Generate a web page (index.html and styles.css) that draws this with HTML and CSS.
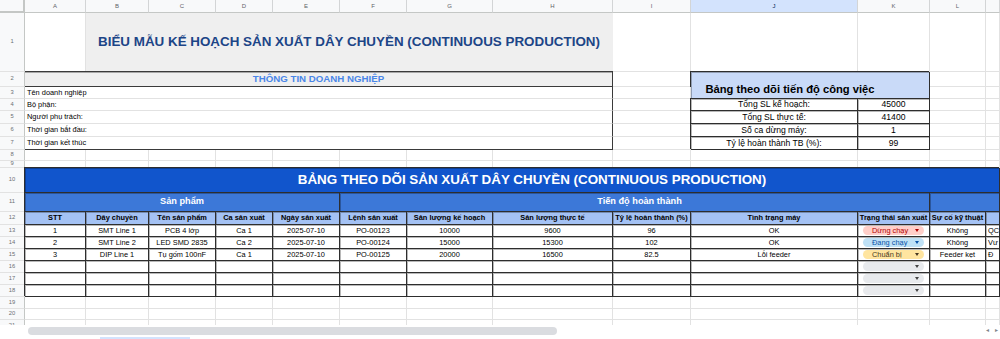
FILE: index.html
```html
<!DOCTYPE html>
<html lang="vi">
<head>
<meta charset="utf-8">
<title>Biểu mẫu kế hoạch sản xuất dây chuyền</title>
<link rel="stylesheet" href="styles.css">
</head>
<body>
<div class="sheet">
  <!-- column headers -->
  <div class="c corner"></div>
  <div class="c hd">A</div><div class="c hd">B</div><div class="c hd">C</div><div class="c hd">D</div><div class="c hd">E</div><div class="c hd">F</div><div class="c hd">G</div><div class="c hd">H</div><div class="c hd">I</div><div class="c hd sel">J</div><div class="c hd">K</div><div class="c hd">L</div><div class="c hd"></div>

  <!-- row 1 -->
  <div class="c rh">1</div>
  <div class="c"></div>
  <div class="c s7 title">BIỂU MẪU KẾ HOẠCH SẢN XUẤT DÂY CHUYỀN (CONTINUOUS PRODUCTION)</div>
  <div class="c"></div><div class="c"></div><div class="c"></div><div class="c"></div><div class="c"></div>

  <!-- row 2 -->
  <div class="c rh">2</div>
  <div class="c s8 info-head">THÔNG TIN DOANH NGHIỆP</div>
  <div class="c"></div>
  <div class="c s2 r2 dk prog-head">Bảng theo dõi tiến độ công việc</div>
  <div class="c"></div><div class="c"></div>

  <!-- row 3 -->
  <div class="c rh">3</div>
  <div class="c s8 lbl box">Tên doanh nghiệp</div>
  <div class="c"></div>
  <div class="c"></div><div class="c"></div>

  <!-- row 4 -->
  <div class="c rh">4</div>
  <div class="c s8 lbl box">Bộ phận:</div>
  <div class="c"></div>
  <div class="c dk kv">Tổng SL kế hoạch:</div><div class="c dk kv">45000</div>
  <div class="c"></div><div class="c"></div>

  <!-- row 5 -->
  <div class="c rh">5</div>
  <div class="c s8 lbl box">Người phụ trách:</div>
  <div class="c"></div>
  <div class="c dk kv">Tổng SL thực tế:</div><div class="c dk kv">41400</div>
  <div class="c"></div><div class="c"></div>

  <!-- row 6 -->
  <div class="c rh">6</div>
  <div class="c s8 lbl box">Thời gian bắt đầu:</div>
  <div class="c"></div>
  <div class="c dk kv">Số ca dừng máy:</div><div class="c dk kv">1</div>
  <div class="c"></div><div class="c"></div>

  <!-- row 7 -->
  <div class="c rh">7</div>
  <div class="c s8 lbl box box-end">Thời gian kết thúc</div>
  <div class="c"></div>
  <div class="c dk kv">Tỷ lệ hoàn thành TB (%):</div><div class="c dk kv">99</div>
  <div class="c"></div><div class="c"></div>

  <!-- row 8 -->
  <div class="c rh">8</div>
  <div class="c"></div><div class="c"></div><div class="c"></div><div class="c"></div><div class="c"></div><div class="c"></div><div class="c"></div><div class="c"></div><div class="c"></div><div class="c"></div><div class="c"></div><div class="c"></div><div class="c"></div>

  <!-- row 9 -->
  <div class="c rh">9</div>
  <div class="c"></div><div class="c"></div><div class="c"></div><div class="c"></div><div class="c"></div><div class="c"></div><div class="c"></div><div class="c"></div><div class="c"></div><div class="c"></div><div class="c"></div><div class="c"></div><div class="c"></div>

  <!-- row 10 -->
  <div class="c rh">10</div>
  <div class="c s13 dk banner">BẢNG THEO DÕI SẢN XUẤT DÂY CHUYỀN (CONTINUOUS PRODUCTION)</div>

  <!-- row 11 -->
  <div class="c rh">11</div>
  <div class="c s5 dk group">Sản phẩm</div>
  <div class="c s6 dk group group-wide">Tiến độ hoàn thành</div>
  <div class="c s2 dk group"></div>

  <!-- row 12 -->
  <div class="c rh">12</div>
  <div class="c dk th">STT</div>
  <div class="c dk th">Dây chuyền</div>
  <div class="c dk th">Tên sản phẩm</div>
  <div class="c dk th">Ca sản xuất</div>
  <div class="c dk th">Ngày sản xuất</div>
  <div class="c dk th">Lệnh sản xuất</div>
  <div class="c dk th">Sản lượng kế hoạch</div>
  <div class="c dk th">Sản lượng thực tế</div>
  <div class="c dk th">Tỷ lệ hoàn thành (%)</div>
  <div class="c dk th">Tình trạng máy</div>
  <div class="c dk th">Trạng thái sản xuất</div>
  <div class="c dk th">Sự cố kỹ thuật</div>
  <div class="c dk th"></div>

  <!-- row 13 -->
  <div class="c rh">13</div>
  <div class="c dk">1</div>
  <div class="c dk">SMT Line 1</div>
  <div class="c dk">PCB 4 lớp</div>
  <div class="c dk">Ca 1</div>
  <div class="c dk">2025-07-10</div>
  <div class="c dk">PO-00123</div>
  <div class="c dk">10000</div>
  <div class="c dk">9600</div>
  <div class="c dk">96</div>
  <div class="c dk">OK</div>
  <div class="c dk chip-cell"><span class="chip chip-stop">Dừng chạy<i class="arrow"></i></span></div>
  <div class="c dk">Không</div>
  <div class="c dk lbl">QC</div>

  <!-- row 14 -->
  <div class="c rh">14</div>
  <div class="c dk">2</div>
  <div class="c dk">SMT Line 2</div>
  <div class="c dk">LED SMD 2835</div>
  <div class="c dk">Ca 2</div>
  <div class="c dk">2025-07-10</div>
  <div class="c dk">PO-00124</div>
  <div class="c dk">15000</div>
  <div class="c dk">15300</div>
  <div class="c dk">102</div>
  <div class="c dk">OK</div>
  <div class="c dk chip-cell"><span class="chip chip-run">Đang chạy<i class="arrow"></i></span></div>
  <div class="c dk">Không</div>
  <div class="c dk lbl">Vư</div>

  <!-- row 15 -->
  <div class="c rh">15</div>
  <div class="c dk">3</div>
  <div class="c dk">DIP Line 1</div>
  <div class="c dk">Tụ gốm 100nF</div>
  <div class="c dk">Ca 1</div>
  <div class="c dk">2025-07-10</div>
  <div class="c dk">PO-00125</div>
  <div class="c dk">20000</div>
  <div class="c dk">16500</div>
  <div class="c dk">82.5</div>
  <div class="c dk">Lỗi feeder</div>
  <div class="c dk chip-cell"><span class="chip chip-prep">Chuẩn bị<i class="arrow"></i></span></div>
  <div class="c dk">Feeder kẹt</div>
  <div class="c dk lbl">Đ</div>

  <!-- row 16 -->
  <div class="c rh">16</div>
  <div class="c dk"></div><div class="c dk"></div><div class="c dk"></div><div class="c dk"></div><div class="c dk"></div><div class="c dk"></div><div class="c dk"></div><div class="c dk"></div><div class="c dk"></div><div class="c dk"></div>
  <div class="c dk chip-cell"><span class="chip chip-empty"><i class="arrow"></i></span></div>
  <div class="c dk"></div><div class="c dk"></div>

  <!-- row 17 -->
  <div class="c rh">17</div>
  <div class="c dk"></div><div class="c dk"></div><div class="c dk"></div><div class="c dk"></div><div class="c dk"></div><div class="c dk"></div><div class="c dk"></div><div class="c dk"></div><div class="c dk"></div><div class="c dk"></div>
  <div class="c dk chip-cell"><span class="chip chip-empty"><i class="arrow"></i></span></div>
  <div class="c dk"></div><div class="c dk"></div>

  <!-- row 18 -->
  <div class="c rh">18</div>
  <div class="c dk"></div><div class="c dk"></div><div class="c dk"></div><div class="c dk"></div><div class="c dk"></div><div class="c dk"></div><div class="c dk"></div><div class="c dk"></div><div class="c dk"></div><div class="c dk"></div>
  <div class="c dk chip-cell"><span class="chip chip-empty"><i class="arrow"></i></span></div>
  <div class="c dk"></div><div class="c dk"></div>

  <!-- row 19 -->
  <div class="c rh">19</div>
  <div class="c"></div><div class="c"></div><div class="c"></div><div class="c"></div><div class="c"></div><div class="c"></div><div class="c"></div><div class="c"></div><div class="c"></div><div class="c"></div><div class="c"></div><div class="c"></div><div class="c"></div>

  <!-- row 20 -->
  <div class="c rh">20</div>
  <div class="c"></div><div class="c"></div><div class="c"></div><div class="c"></div><div class="c"></div><div class="c"></div><div class="c"></div><div class="c"></div><div class="c"></div><div class="c"></div><div class="c"></div><div class="c"></div><div class="c"></div>

  <!-- row 21 -->
  <div class="c rh rh-top">21</div>
  <div class="c"></div><div class="c"></div><div class="c"></div><div class="c"></div><div class="c"></div><div class="c"></div><div class="c"></div><div class="c"></div><div class="c"></div><div class="c"></div><div class="c"></div><div class="c"></div><div class="c"></div>

  <!-- horizontal scrollbar overlay -->
  <div class="hscroll">
    <div class="thumb"></div>
    <div class="scroll-arrows"><span>&#9666;</span><span>&#9656;</span></div>
    <div class="tab-edge"></div>
  </div>
</div>
</body>
</html>
```

FILE: styles.css
```css
* { box-sizing: border-box; }

html, body {
  margin: 0;
  padding: 0;
  background: #ffffff;
}

.sheet {
  position: relative;
  width: 1000px;
  height: 339px;
  overflow: hidden;
  display: grid;
  grid-template-columns: 25px 61px 63px 67px 57px 67px 67px 86px 120px 78px 167px 72px 56px 14px;
  grid-template-rows: 13px 59px 15px 12px 12px 13px 13px 13px 11px 7px 25px 19px 13px 12px 12px 12px 12px 12px 12px 12px 11px 19px;
  font-family: "Liberation Sans", Arial, sans-serif;
  font-size: 7.4px;
  color: #000;
}

.c {
  min-width: 0;
  border-right: 1px solid #e2e2e2;
  border-bottom: 1px solid #e2e2e2;
  display: flex;
  align-items: center;
  justify-content: center;
  white-space: nowrap;
  overflow: hidden;
  line-height: 1;
  background: #fff;
}

/* spans */
.s2 { grid-column: span 2; }
.s5 { grid-column: span 5; }
.s6 { grid-column: span 6; }
.s7 { grid-column: span 7; }
.s8 { grid-column: span 8; }
.s13 { grid-column: span 13; }
.r2 { grid-row: span 2; }

/* headers */
.corner {
  background: #f8f9fa;
  border-right: 2px solid #c4c7c5;
  border-bottom: 2px solid #c4c7c5;
}
.hd {
  background: #f8f9fa;
  border-right-color: #d3d5d6;
  border-bottom-color: #c4c7c5;
  color: #5f6368;
  font-size: 6px;
}
.hd.sel {
  background: #d3e3fd;
  color: #0b2a5c;
}
.rh {
  background: #f8f9fa;
  border-right-color: #c4c7c5;
  border-bottom-color: #e2e2e2;
  color: #6b6f73;
  font-size: 5.8px;
}
.rh-top { align-items: flex-start; padding-top: 3px; }

/* title */
.title {
  background: #efefef;
  color: #1c4587;
  font-weight: bold;
  font-size: 13.4px;
  border-right-color: #efefef;
  border-bottom-color: #e2e2e2;
}

/* company info box */
.info-head {
  background: #efefef;
  color: #4a86e8;
  font-weight: bold;
  font-size: 9.7px;
  border-right: 1px solid #3a3a3a;
  border-bottom: 1px solid #3a3a3a;
  box-shadow: 0 -1px 0 #3a3a3a, inset 0 1px 0 rgba(0, 0, 0, 0.3);
}
.box {
  border-right: 1px solid #3a3a3a;
}
.box-end {
  border-bottom: 1px solid #3a3a3a;
}
.lbl {
  justify-content: flex-start;
  padding-left: 2px;
}

/* dark-bordered cells */
.dk {
  border-right: 1px solid #2e2e2e;
  border-bottom: 1px solid #2e2e2e;
  box-shadow: -1px -1px 0 #2e2e2e, inset 1px 1px 0 rgba(0, 0, 0, 0.28);
}

.kv { font-size: 8.6px; }

.prog-head {
  background: #c9daf8;
  font-weight: bold;
  font-size: 11.2px;
  align-items: flex-end;
  padding: 0 40px 3px 0;
}

/* production table */
.banner {
  background: #1155cc;
  color: #fff;
  font-weight: bold;
  font-size: 13.4px;
  padding-left: 40px;
}
.group {
  background: #3c78d8;
  color: #fff;
  font-weight: bold;
  font-size: 9.2px;
}
.group-wide { padding-left: 10px; }
.th {
  background: #a4c2f4;
  font-weight: bold;
}

/* dropdown chips */
.chip-cell {
  justify-content: flex-start;
  padding-left: 5px;
}
.chip {
  width: 61px;
  height: 9px;
  border-radius: 5px;
  display: flex;
  align-items: center;
  justify-content: space-between;
  padding: 0 5px 0 9px;
  font-size: 7.4px;
}
.arrow {
  width: 0;
  height: 0;
  border-left: 2.5px solid transparent;
  border-right: 2.5px solid transparent;
  border-top: 3px solid currentColor;
}
.chip-empty { justify-content: flex-end; background: #e8eaed; color: #444; }
.chip-stop { background: #ffcfc9; color: #b10202; }
.chip-run { background: #bfe1f6; color: #0a53a8; }
.chip-prep { background: #ffe5a0; color: #473821; }

/* scrollbar overlay */
.hscroll {
  position: absolute;
  left: 0;
  right: 0;
  top: 325px;
  height: 14px;
  background: #fff;
}
.thumb {
  position: absolute;
  left: 28px;
  top: 2px;
  width: 529px;
  height: 8px;
  border-radius: 4px;
  background: #dadce0;
}
.scroll-arrows {
  position: absolute;
  right: 2px;
  top: 1px;
  display: flex;
  gap: 6px;
  font-size: 6px;
  color: #80868b;
}
.tab-edge {
  position: absolute;
  left: 100px;
  bottom: 0;
  width: 90px;
  height: 2px;
  background: #d3e3fd;
}
```
